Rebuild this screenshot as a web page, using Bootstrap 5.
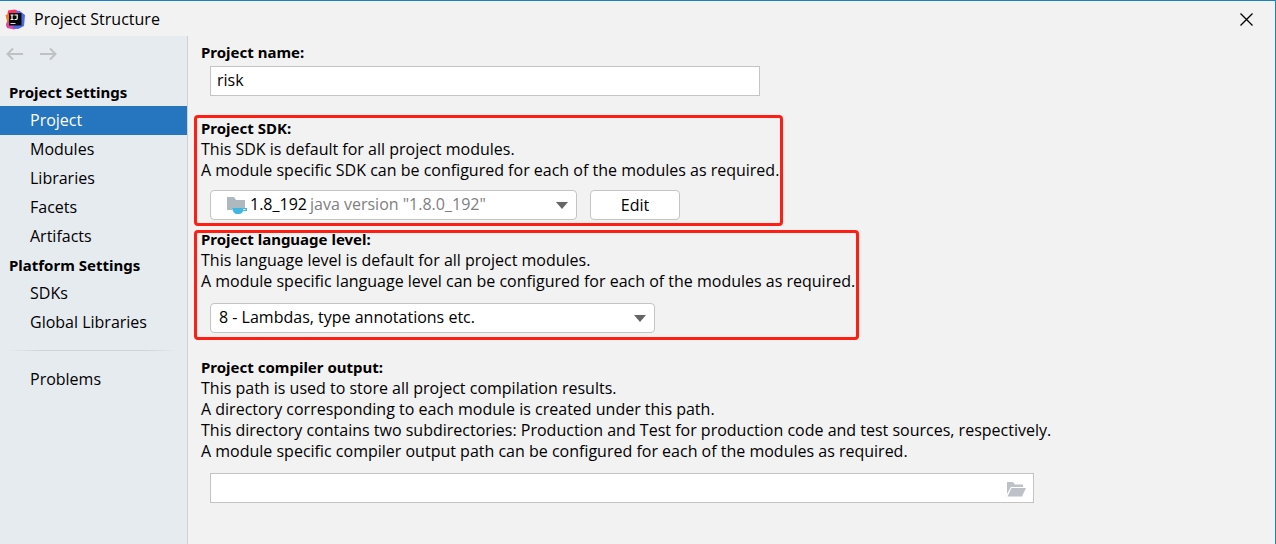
<!DOCTYPE html>
<html lang="en">
<head>
<meta charset="utf-8">
<meta name="viewport" content="width=device-width, initial-scale=1">
<title>Project Structure</title>
<link href="https://cdn.jsdelivr.net/npm/bootstrap@5.3.0/dist/css/bootstrap.min.css" rel="stylesheet">
<style>
  body { font-family: "Open Sans", "Noto Sans", sans-serif; font-size: 16px; line-height: 21px; color: #000; background: #f2f2f2; }
  .dialog { border-top: 1px solid #1a7fd4; border-right: 1px solid #1a7fd4; }
  .titlebar { height: 35px; padding: 1px 22px 0 5px; }
  .titlebar h1 { font-size: 16px; line-height: 21px; font-weight: 400; }
  .plain-btn { border: 0; background: none; padding: 0; display: flex; }
  .sidebar { width: 188px; background: #e6ebf0; border-right: 1px solid #d0d0d0; }
  .history { height: 42px; padding: 10px 6px 0; gap: 17px; }
  .side-title, .group-title { font-family: "Noto Sans", sans-serif; font-size: 15px; font-weight: 700; margin: 0; }
  .side-title { line-height: 28px; padding-left: 9px; }
  .sidebar .nav-link { padding: 0 0 0 30px; line-height: 29px; color: #000; border-radius: 0; }
  .sidebar .nav-link.active { background: #2675bf; color: #fff; }
  .side-rule { height: 1px; margin: 13px 8px 14px; background: linear-gradient(90deg, transparent, #d0d3d6 20%, #d0d3d6 80%, transparent); }
  .settings { padding: 3px 12px 32px 6px; }
  .group { width: fit-content; max-width: 100%; padding: 0 1px 3px 4px; border: 3px solid transparent; border-radius: 4px; }
  .group.marked { border-color: #ff1e12; }
  .group-title { display: block; line-height: 21px; }
  .group p { margin: 0; }
  .fields { margin: 9px 0 0 9px; gap: 13px; }
  .form-control, .form-select, .edit-btn { height: 30px; font-size: 16px; line-height: 20px; color: #000; background-color: #fff; border: 1px solid #c4c4c4; }
  .form-control { border-radius: 0; padding: 3px 6px 5px; }
  .form-select { border-radius: 4px; padding: 3px 32px 5px 8px;
    background-image: url("data:image/svg+xml,%3Csvg xmlns='http://www.w3.org/2000/svg' viewBox='0 0 12 7'%3E%3Cpath fill='%23666' d='M0 0h12L6 7z'/%3E%3C/svg%3E");
    background-size: 12px 7px; background-position: right 8px center; }
  .edit-btn { width: 90px; border-radius: 4px; padding: 0; }
  .name-field { width: 550px; }
  .sdk-field { width: 367px; }
  .sdk-field .form-select { padding-left: 39px; }
  .sdk-icon { left: 17px; top: 6px; }
  .sdk-version { left: 100px; top: 4px; line-height: 20px; color: #808080; }
  .sdk-icon, .sdk-version { pointer-events: none; }
  .level-field { width: 445px; }
  .output-field { width: 824px; }
  .browse { right: 8px; top: 9px; }
  .name-group { margin-bottom: 13px; }
  .name-group .fields { margin-top: 3px; }
  .sdk-group { margin-bottom: 4px; }
  .level-group { margin-bottom: 14px; padding-bottom: 4px; }
  .level-group .group-title { margin-top: -4px; }
  .level-group .fields, .output-group .fields { margin-top: 11px; }
</style>
</head>
<body>
<div class="dialog min-vh-100 d-flex flex-column">
  <header class="titlebar d-flex align-items-center">
    <svg width="21" height="21" viewBox="0 0 21 21" aria-hidden="true">
      <path fill="#fe315d" d="M3 1.500 10 .5 16 4 10 10 2 9z"/>
      <path fill="#f97a12" d="M.5 6 5 5v9l-1 5-3-2 1-5z"/>
      <path fill="#d64aa7" d="M1 15l3-4 9 8-4 1.500-7-1.500z"/>
      <path fill="#4a68e8" d="M11 4l3-2.500 6 4.500-1 11-6 3-5-1z"/>
      <path fill="#7a5cf0" d="M11 1l4 2-3 3z"/>
      <path fill="#080808" d="M4 4h12.500v12.500H4z"/>
      <path fill="none" stroke="#fff" stroke-width="1.200" d="M5.500 6h3M7 6v4.500M5.500 10.500h3M9.500 6h2.700v3.200q0 1.300-1.300 1.300h-1.400"/>
      <path fill="#ddd" d="M5.500 14h5v1h-5z"/>
    </svg>
    <h1 class="mb-0 ms-2">Project Structure</h1>
    <button class="plain-btn ms-auto" type="button" aria-label="Close">
      <svg width="13" height="13" viewBox="0 0 13 13"><path stroke="#000" stroke-width="1.300" d="M.5.5l12 12M12.500.5l-12 12"/></svg>
    </button>
  </header>
  <div class="d-flex flex-grow-1">
    <nav class="sidebar flex-shrink-0" aria-label="Settings">
      <div class="history d-flex align-items-start">
        <button class="plain-btn" type="button" aria-label="Back">
          <svg width="17" height="16" viewBox="0 0 17 16" fill="none" stroke="#bfc1c3" stroke-width="2"><path d="M17 8H2M7 2.500 1.500 8 7 13.500"/></svg>
        </button>
        <button class="plain-btn" type="button" aria-label="Forward">
          <svg width="17" height="16" viewBox="0 0 17 16" fill="none" stroke="#bfc1c3" stroke-width="2"><path d="M0 8h15M10 2.500 15.500 8 10 13.500"/></svg>
        </button>
      </div>
      <h2 class="side-title">Project Settings</h2>
      <div class="nav nav-pills flex-column">
        <a class="nav-link active" href="#project" aria-current="page">Project</a>
        <a class="nav-link" href="#modules">Modules</a>
        <a class="nav-link" href="#libraries">Libraries</a>
        <a class="nav-link" href="#facets">Facets</a>
        <a class="nav-link" href="#artifacts">Artifacts</a>
      </div>
      <h2 class="side-title">Platform Settings</h2>
      <div class="nav flex-column">
        <a class="nav-link" href="#sdks">SDKs</a>
        <a class="nav-link" href="#global">Global Libraries</a>
      </div>
      <div class="side-rule"></div>
      <a class="nav-link" href="#problems">Problems</a>
    </nav>
    <main class="settings flex-grow-1" id="project">
      <section class="group name-group">
        <label class="group-title" for="name">Project name:</label>
        <div class="d-flex fields"><input class="form-control name-field" id="name" type="text" value="risk"></div>
      </section>
      <section class="group marked sdk-group">
        <label class="group-title" for="sdk">Project SDK:</label>
        <p>This SDK is default for all project modules.</p>
        <p>A module specific SDK can be configured for each of the modules as required.</p>
        <div class="d-flex fields">
          <div class="sdk-field position-relative">
            <select class="form-select" id="sdk"><option>1.8_192</option></select>
            <svg class="sdk-icon position-absolute" width="20" height="18" viewBox="0 0 20 18" aria-hidden="true">
              <path fill="#aeb8bf" d="M0 1h7l2 3h9v8H5v2H0z"/>
              <path fill="#40b6e0" d="M5 12h15v3h-4q-1 3-4 3h-3q-3-1-4-6z"/>
              <path fill="#fff" d="M16 13h2.500v1H16z"/>
            </svg>
            <span class="sdk-version position-absolute">java version "1.8.0_192"</span>
          </div>
          <button class="btn edit-btn" type="button">Edit</button>
        </div>
      </section>
      <section class="group marked level-group">
        <label class="group-title" for="level">Project language level:</label>
        <p>This language level is default for all project modules.</p>
        <p>A module specific language level can be configured for each of the modules as required.</p>
        <div class="d-flex fields">
          <select class="form-select level-field" id="level"><option>8 - Lambdas, type annotations etc.</option></select>
        </div>
      </section>
      <section class="group output-group">
        <label class="group-title" for="output">Project compiler output:</label>
        <p>This path is used to store all project compilation results.</p>
        <p>A directory corresponding to each module is created under this path.</p>
        <p>This directory contains two subdirectories: Production and Test for production code and test sources, respectively.</p>
        <p>A module specific compiler output path can be configured for each of the modules as required.</p>
        <div class="d-flex fields">
          <div class="output-field position-relative">
            <input class="form-control pe-5" id="output" type="text">
            <button class="plain-btn browse position-absolute" type="button" aria-label="Browse">
              <svg width="19" height="15" viewBox="0 0 19 15" fill="#bcc2c7"><path d="M0 0h6l2 2.500h8V5H4L0 12z"/><path d="M4.500 6H19l-4 8.500H.5z"/></svg>
            </button>
          </div>
        </div>
      </section>
    </main>
  </div>
</div>
<script src="https://cdn.jsdelivr.net/npm/bootstrap@5.3.0/dist/js/bootstrap.bundle.min.js"></script>
</body>
</html>
